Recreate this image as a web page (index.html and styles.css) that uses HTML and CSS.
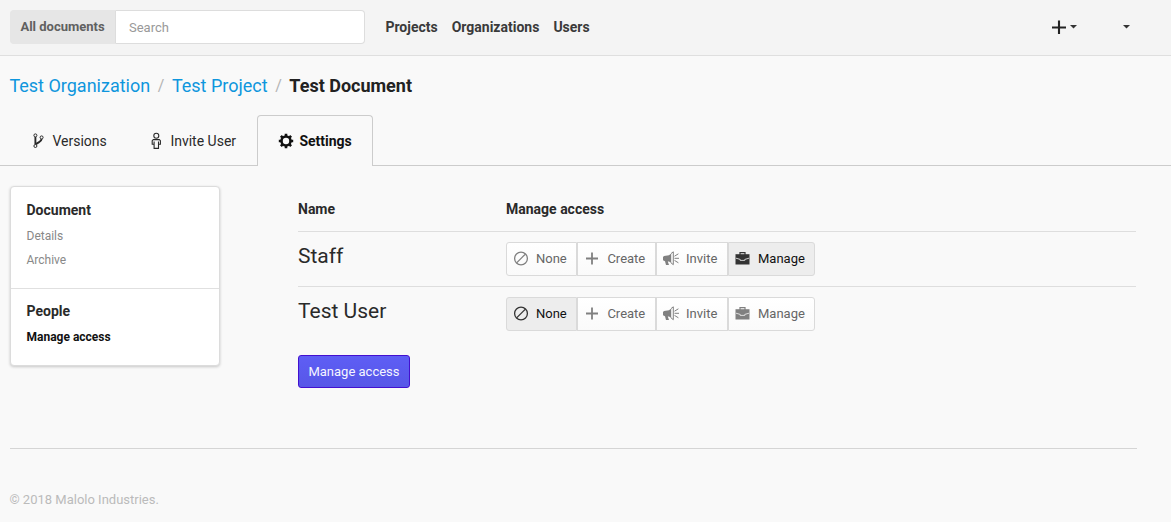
FILE: index.html
```
<!DOCTYPE html>
<html lang="en">
<head>
<meta charset="utf-8">
<title>Manage access</title>
<link rel="stylesheet" href="styles.css">
</head>
<body>
<svg class="defs" width="0" height="0">
  <symbol id="none" viewBox="0 0 16 16"><circle cx="8" cy="7.5" r="6.4" fill="none" stroke="currentColor" stroke-width="1.3"/><path d="M3.6 11.9 12.4 3.1" stroke="currentColor" stroke-width="1.3"/></symbol>
  <symbol id="create" viewBox="0 0 16 16"><path d="M2 7.5H14M8 1.5V13.5" stroke="currentColor" stroke-width="1.8"/></symbol>
  <symbol id="invite" viewBox="0 0 16 16"><path d="M0 6 1 5 6 4.3 8.2 2.5V12L6 10.5H4.8L6 14H3L2 10.2 0 9.2Z" fill="currentColor"/><path d="M8 2.6 10.3 .8V13.7L8 11.8" fill="none" stroke="currentColor" stroke-width="1"/><path d="M11.5 5.2 15.4 2.8M11.5 7.3H16M11.5 9.4 15.4 11.8" stroke="currentColor" stroke-width="1"/></symbol>
  <symbol id="manage" viewBox="0 0 16 16"><path d="M5 4V1.6H10V4" fill="none" stroke="currentColor" stroke-width="1.2"/><path d="M.5 3.2H14.5V13.5H.5Z" fill="currentColor"/><path d="M1 7.2 5.2 8.4V9.4H9.8V8.4L14 7.2" fill="none" stroke="#f4f4f4" stroke-width=".8"/></symbol>
</svg>
<header class="topbar">
  <div class="search"><button class="scope">All documents</button><input class="query" placeholder="Search"></div>
  <nav class="mainnav"><a>Projects</a><a>Organizations</a><a>Users</a></nav>
  <div class="tools">
    <svg class="plus" viewBox="0 0 14 14"><path d="M0 7.5H14M7 .5V14" stroke="currentColor" stroke-width="2.1"/></svg>
    <i class="caret"></i><i class="caret account"></i>
  </div>
</header>
<nav class="crumbs"><a>Test Organization</a><span class="slash">/</span><a>Test Project</a><span class="slash">/</span><b>Test Document</b></nav>
<nav class="tabs">
  <a class="tab versions"><svg viewBox="0 0 12 18"><g fill="none" stroke="currentColor"><circle cx="3.4" cy="3.4" r="1.5"/><circle cx="3.4" cy="14" r="1.5"/><circle cx="9.6" cy="5.4" r="1.5"/><path d="M3.4 5V12.4" stroke-width="1.9"/><path d="M9.6 7C9.4 10 6.5 9.8 3.8 12.2" stroke-width="2"/></g></svg>Versions</a>
  <a class="tab person"><svg viewBox="0 0 12 18"><g fill="none" stroke="currentColor" stroke-width="1.1"><circle cx="6.3" cy="3.7" r="2.5"/><path d="M3.3 7.6H9.3L10.4 8.7V12.2H8.5V16.4H4.1V12.2H2.2V8.7ZM4.1 9.5V12.5M8.5 9.5V12.5"/></g></svg>Invite User</a>
  <a class="tab active"><svg viewBox="0 0 16 16"><circle cx="8" cy="8" r="4.5" fill="none" stroke="currentColor" stroke-width="2.6"/><path d="M8 .8V3.5M8 12.5V15.2M.8 8H3.5M12.5 8H15.2M2.9 2.9 4.8 4.8M11.2 11.2 13.1 13.1M2.9 13.1 4.8 11.2M11.2 4.8 13.1 2.9" stroke="currentColor" stroke-width="2.6"/></svg>Settings</a>
</nav>
<div class="layout">
  <aside class="panel">
    <section><h4>Document</h4><a>Details</a><a>Archive</a></section>
    <section><h4>People</h4><a class="current">Manage access</a></section>
  </aside>
  <main class="access">
    <div class="row head"><span>Name</span><span>Manage access</span></div>
    <div class="row">
      <span class="who">Staff</span>
      <div class="group">
        <button class="w-none"><svg><use href="#none"/></svg>None</button><button class="w-create"><svg><use href="#create"/></svg>Create</button><button class="w-invite"><svg><use href="#invite"/></svg>Invite</button><button class="w-manage on"><svg><use href="#manage"/></svg>Manage</button>
      </div>
    </div>
    <div class="row">
      <span class="who">Test User</span>
      <div class="group">
        <button class="w-none on"><svg><use href="#none"/></svg>None</button><button class="w-create"><svg><use href="#create"/></svg>Create</button><button class="w-invite"><svg><use href="#invite"/></svg>Invite</button><button class="w-manage"><svg><use href="#manage"/></svg>Manage</button>
      </div>
    </div>
    <button class="submit">Manage access</button>
  </main>
</div>
<footer class="footer">© 2018 Malolo Industries.</footer>
</body>
</html>
```

FILE: styles.css
```
* { box-sizing: border-box; }
body { margin: 0; height: 522px; overflow: hidden; background: #f9f9f9; color: #2a2a2a; font: 14px/20px Roboto, sans-serif; }
button, input { font: inherit; letter-spacing: inherit; margin: 0; }
.defs { display: block; height: 0; }
.topbar { display: flex; align-items: center; height: 56px; padding: 0 41px 2px 10px; background: #f4f4f4; border-bottom: 1px solid #dfdfdf; }
.search { display: flex; width: 355px; height: 34px; }
.scope { width: 106px; padding: 0 1px 0 0; border: 1px solid #e6e6e6; border-right-color: #ddd; border-radius: 4px 0 0 4px; background: #e6e6e6; color: #606060; font-size: 13px; font-weight: 700; }
.query { width: 249px; padding: 2px 13px 0; border: 1px solid #ddd; border-left: 0; border-radius: 0 4px 4px 0; background: #fff; font-size: 13px; }
.query::placeholder { color: #999; opacity: 1; }
.mainnav { display: flex; gap: 14px; margin-left: 20.4px; font-weight: 700; color: #3a3a3a; }
.tools { display: flex; align-items: center; margin-left: auto; color: #222; }
.plus { width: 14px; height: 14px; }
.caret { width: 8px; height: 4px; margin-left: 4px; background: #333; clip-path: polygon(0 0, 100% 0, 50% 100%); }
.account { margin-left: 45px; }
.tools { margin-right: -.5px; }
.crumbs { display: flex; padding: 18px 10px 0 9.4px; height: 59px; font-size: 18px; line-height: 24px; color: #222; }
.crumbs a { color: #0e96dd; }
.slash { width: 21.7px; text-align: center; color: #b4b4b4; font-size: 16px; }
.tabs { display: flex; height: 51px; border-bottom: 1px solid #ccc; padding-left: 10px; }
.tab { display: flex; align-items: center; height: 51px; padding-top: 1px; }
.tab svg { width: 12px; height: 18px; margin-right: 8.4px; }
.versions { width: 118px; padding-left: 22px; }
.person { width: 129px; padding-left: 22px; }
.tab.active { width: 116px; padding: 0 0 0 20px; border: 1px solid #ccc; border-bottom: 0; border-radius: 4px 4px 0 0; background: #f9f9f9; color: #111; font-weight: 700; }
.tab.active svg { width: 16px; height: 16px; margin-right: 5.4px; }
.layout { display: flex; gap: 78px; padding: 20px 10px 0; height: 282px; }
.panel { width: 210px; height: 180px; border: 1px solid #dcdcdc; border-radius: 4px; background: #fff; box-shadow: 0 1px 3px rgba(0,0,0,.2); }
.panel section { padding: 13px 15.5px; }
.panel section:first-child { height: 102px; border-bottom: 1px solid #e0e0e0; }
.panel section + section { padding-top: 12px; }
.panel h4 { margin: 0 0 4px; font-size: 14px; line-height: 20px; }
.panel a { display: block; font-size: 12px; line-height: 24px; color: #888; }
.panel a.current { color: #111; font-weight: 700; }
.access { width: 838px; }
.row { display: flex; height: 55px; padding-top: 10px; }
.row + .row { border-top: 1px solid #dedede; }
.row > :first-child { width: 208px; }
.row.head { height: 45px; padding-top: 13px; font-weight: 700; }
.who { font-size: 21px; line-height: 28px; }
.group { display: flex; }
.group button { display: flex; align-items: center; height: 34px; padding: 0; padding-left: 6px; border: 1px solid #dadada; background: linear-gradient(#fff, #fafafa); color: #666; font-size: 13px; }
.group button:first-child { border-radius: 3px 0 0 3px; }
.group button:last-child { border-radius: 0 3px 3px 0; }
.group svg { width: 16px; height: 16px; margin-right: 7px; color: #808080; }
.group .on { background: #ededed; color: #111; }
.group .on svg { color: #333; }
.w-none { width: 71px; }
.w-create { width: 79px; }
.group .w-create svg { margin-right: 7.4px; }
.w-invite { width: 72px; }
.w-manage { width: 87px; }
.submit { display: block; width: 112px; height: 33px; margin-top: 14px; padding: 0; border: 1px solid #4310d0; border-radius: 3px; background: linear-gradient(#5e5ef5, #5757e7); color: #f5f5ff; font-size: 13px; }
.footer { width: 1127px; margin-left: 10px; padding-top: 41px; border-top: 1px solid #d5d5d5; color: #bbb; font-size: 13px; text-indent: -.6px; }
```
